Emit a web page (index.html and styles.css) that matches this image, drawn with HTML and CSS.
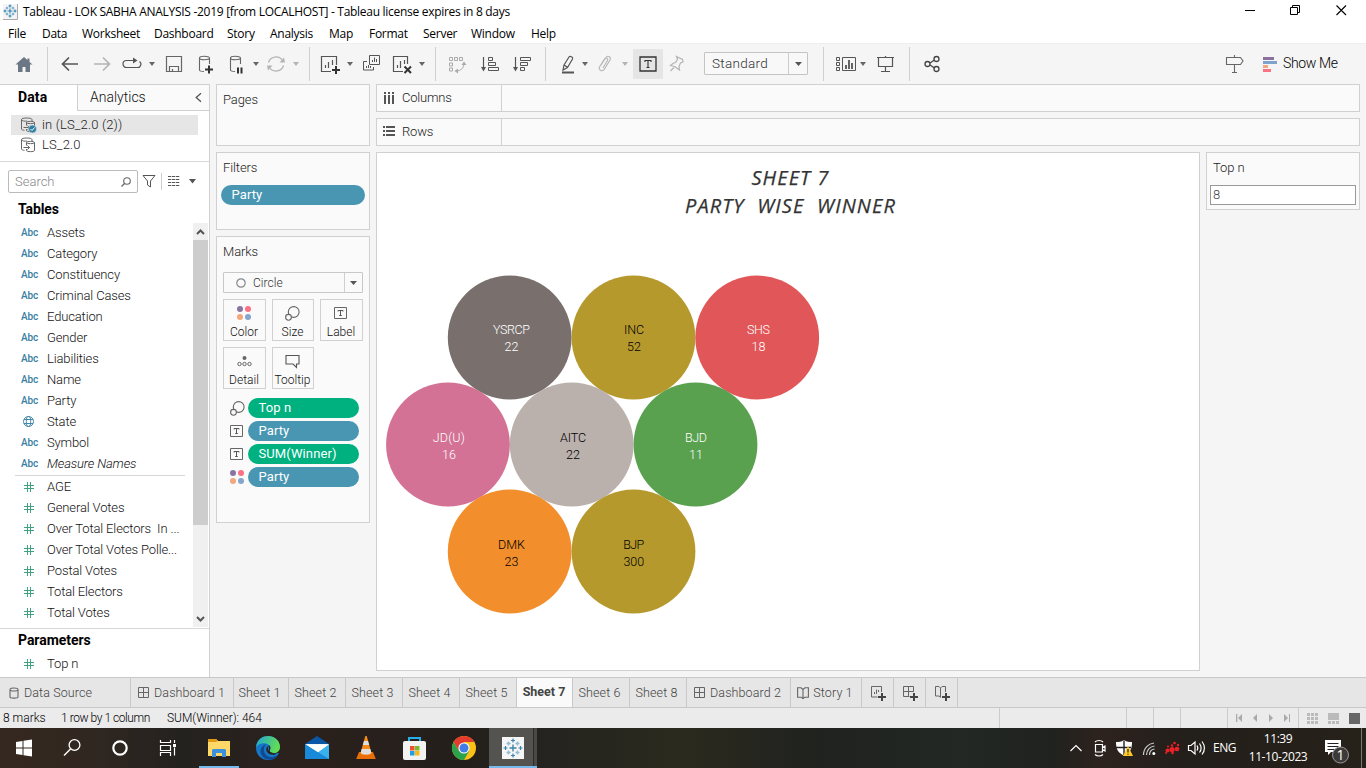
FILE: index.html
```html
<!DOCTYPE html>
<html lang="en">
<head>
<meta charset="utf-8">
<title>Tableau - LOK SABHA ANALYSIS -2019</title>
<link rel="stylesheet" href="styles.css">
</head>
<body>
<svg class="defs" width="0" height="0">
  <defs>
    <symbol id="logo" viewBox="0 0 22 22">
      <g fill="none" stroke="#3d84ab"><path d="M11 7.500v7M7.500 11h7" stroke-width="1.400"/><path d="M11 1.500v4M9 3.500h4M11 16.500v4M9 18.500h4M3.500 9v4M1.500 11h4M18.500 9v4M16.500 11h4" stroke-width="1.200"/></g>
      <g fill="none" stroke="#8fbad0" stroke-width="1.500"><path d="M6.500 4.500v4M4.500 6.500h4M15.500 4.500v4M13.500 6.500h4M6.500 13.500v4M4.500 15.500h4M15.500 13.500v4M13.500 15.500h4"/></g>
    </symbol>
    <symbol id="logo-sm" viewBox="0 0 14 14">
      <g fill="none" stroke="#2f83b0" stroke-width="1.100"><path d="M7 4.500v5M4.500 7h5M7 .5v3M5.500 2h3M7 10.500v3M5.500 12h3M2 5.500v3M.5 7h3M12 5.500v3M10.500 7h3"/></g>
      <g fill="none" stroke="#5c9dc0"><path d="M4 2.800v2.600M2.700 4h2.600M10 2.800v2.600M8.700 4h2.600M4 8.700v2.600M2.700 10h2.600M10 8.700v2.600M8.700 10h2.600"/></g>
    </symbol>
    <symbol id="caret" viewBox="0 0 6 4"><path d="M0 0h6L3 4z" fill="currentColor"/></symbol>
    <symbol id="dots" viewBox="0 0 14 14"><circle cx="3" cy="3" r="3" fill="#8a75a0"/><circle cx="11" cy="3" r="3" fill="#fb7284"/><circle cx="3" cy="11" r="3" fill="#f4a67c"/><circle cx="11" cy="11" r="3" fill="#84a6cb"/></symbol>
    <symbol id="size" viewBox="0 0 15 15"><g fill="#fafafa" stroke="#666" stroke-width="1.100"><circle cx="8.700" cy="6" r="5.400"/><circle cx="3.500" cy="11.300" r="2.900"/></g></symbol>
    <symbol id="tbox" viewBox="0 0 13 12"><path d="M.5.5h12v11H.5z" fill="none" stroke="#666"/><path d="M4 4.500V3.500h5v1M6.500 3.500v5M5.200 8.500h2.600" fill="none" stroke="#555"/></symbol>
    <symbol id="hash" viewBox="0 0 10 10"><path d="M3.500 0v10M6.500 0v10M0 3.500h10M0 6.500h10" stroke="#3fa37f" fill="none"/></symbol>
    <symbol id="grid" viewBox="0 0 11 11"><path d="M.5.5h10v10H.5zM5.500.5v10M.5 5.500h10" fill="none" stroke="#666"/></symbol>
    <symbol id="book" viewBox="0 0 12 12"><path d="M6 2.500 4 .8H.6v9.400h3.600L6 11.700l1.800-1.500h3.600V.8H8L6 2.500v9" fill="none" stroke="#666" stroke-width="1.100"/></symbol>
    <symbol id="dsrc" viewBox="0 0 16 16"><g fill="none" stroke="#666"><path d="M12 4V2.500C12 .5 1.500.5 1.500 2.500v9.500c0 .8 1.500 1.300 3 1.300M1.500 2.500C1.500 4 5 4.500 7 4"/><path d="M6.500 8.500v-3c0-1.500 8-1.500 8 0v8c0 1.500-8 1.500-8 0V12M6.500 5.500c0 1.500 8 1.500 8 0M3.500 10.500h6M7.500 8.500l2 2-2 2"/></g></symbol>
  </defs>
</svg>

<header class="titlebar">
  <svg class="app-icon" width="15" height="16"><rect width="15" height="16" fill="#f4f4f4"/><path d="M0 15.500h14.500V0" fill="none" stroke="#aaa"/><use href="#logo-sm" width="14" height="14"/></svg>
  <span class="title-text">Tableau - LOK SABHA ANALYSIS -2019 [from LOCALHOST] - Tableau license expires in 8 days</span>
  <svg class="win-controls" width="110" height="20"><g fill="none" stroke="#000"><path d="M0 8.500h10M45.500 5.500h7v7h-7zM47.500 5V3.500h7v7H53"/><path d="m91.500 3.500 9.500 9.500m0-9.500-9.500 9.500" stroke-width="1.100"/></g></svg>
</header>

<nav class="menubar">
  <span class="m-file">File</span><span class="m-data">Data</span><span class="m-work">Worksheet</span><span class="m-dash">Dashboard</span><span class="m-story">Story</span><span class="m-ana">Analysis</span><span class="m-map">Map</span><span class="m-format">Format</span><span class="m-server">Server</span><span class="m-window">Window</span><span>Help</span>
</nav>

<div class="toolbar">
  <svg class="ic g13"><path d="M11 4 2.500 11.500H5V19h4.500v-5h3v5H17v-7.500h2.500L16.500 9V5.500h-2V7z" fill="#6b7785"/></svg>
  <i class="sep g12"></i>
  <svg class="ic g11"><path d="M19 11H4M10 4.500 3.500 11l6.500 6.500" fill="none" stroke="#555" stroke-width="1.700"/></svg>
  <svg class="ic g10"><path d="M3 11h15M12 4.500l6.500 6.500-6.500 6.500" fill="none" stroke="#b4b4b4" stroke-width="1.700"/></svg>
  <svg class="ic g8"><path d="M13 7.500H5.500a3.500 3.500 0 0 0 0 7h11a3.300 3.300 0 0 0 2-6" fill="none" stroke="#555" stroke-width="1.200"/><path d="M12 4.500v6l4.500-3z" fill="#555"/></svg>
  <svg class="caret g6"><use href="#caret"/></svg>
  <svg class="ic g8"><path d="M3.500 3.500h15v15h-15zM6.500 18v-4.500h9V18M9.500 18v-2" fill="none" stroke="#666" stroke-width="1.200"/></svg>
  <svg class="ic g10"><path d="M9 18.500c-2.500 0-4.500-.6-4.500-1.500V5c0-2.300 10-2.300 10 0v6M4.500 5c0 2.300 10 2.300 10 0" fill="none" stroke="#666" stroke-width="1.100"/><path d="M14 12.500v8M10 16.500h8" stroke="#333" stroke-width="2" fill="none"/></svg>
  <svg class="ic g9"><path d="M9 18.500c-2.500 0-4.500-.6-4.500-1.500V5c0-2.300 10-2.300 10 0v6M4.500 5c0 2.300 10 2.300 10 0" fill="none" stroke="#666" stroke-width="1.100"/><path d="M12 14.500v6M15.500 14.500v6" stroke="#333" stroke-width="2" fill="none"/></svg>
  <svg class="caret g5"><use href="#caret"/></svg>
  <svg class="ic g6"><path d="M3.500 9.500a7.800 7.800 0 0 1 14-2M18.500 12.500a7.800 7.800 0 0 1-14 2" fill="none" stroke="#b4b4b4" stroke-width="1.300"/><path d="M14.500 9.500h5.500l-1-5zM7.500 12.500H2l1 5z" fill="#b4b4b4"/></svg>
  <svg class="caret pale g6"><use href="#caret"/></svg>
  <i class="sep g10"></i>
  <svg class="ic g9"><path d="M12 18.500H2.500v-15h15V12M6.500 15v-3M9.500 15V9M13.500 12V7" fill="none" stroke="#555" stroke-width="1.200"/><path d="M17 13v8M13 17h8" stroke="#333" stroke-width="2" fill="none"/></svg>
  <svg class="caret g6"><use href="#caret"/></svg>
  <svg class="ic g7"><path d="M9.500 2.500h10v9h-10zM7 8.500H3.500v8.500h10v-3M12.500 9V7M14.500 9V4.500M16.500 9V6M6.500 15v-2M8.500 15v-3M10.500 15v-2" fill="none" stroke="#555"/></svg>
  <svg class="ic g10"><path d="M11 18.500H1.500v-15h14V11M5.500 15v-3M8.500 15V8M12.500 11V7" fill="none" stroke="#555" stroke-width="1.200"/><path d="m12.500 13.500 6.500 6.500m0-6.500L12.500 20" stroke="#333" stroke-width="2" fill="none"/></svg>
  <svg class="caret g5"><use href="#caret"/></svg>
  <i class="sep g10"></i>
  <svg class="ic g10"><path d="M3.500 4.500h3v3h-3zM8.500 4.500h3v3h-3zM13.500 4.500h3v3h-3zM3.500 10h3v3h-3zM3.500 15h3v3h-3zM18 10c0 5-3 8-8 8" fill="none" stroke="#aaa"/><path d="m15.500 12 2.500-3.500 2.500 3.500zM12 15.500 8.500 18l3.500 2.500z" fill="#aaa"/></svg>
  <svg class="ic g11"><path d="M4.500 4v13" stroke="#555" stroke-width="1.200"/><path d="m2 14 2.500 4.500L7 14z" fill="#555"/><path d="M9.500 4.500h4v3h-4zM9.500 9.500h7v3h-7zM9.500 14.500h10v3h-10z" fill="none" stroke="#555"/></svg>
  <svg class="ic g10"><path d="M4.500 4v13" stroke="#555" stroke-width="1.200"/><path d="m2 14 2.500 4.500L7 14z" fill="#555"/><path d="M9.500 4.500h10v3h-10zM9.500 9.500h7v3h-7zM9.500 14.500h4v3h-4z" fill="none" stroke="#555"/></svg>
  <i class="sep g12"></i>
  <svg class="ic g11"><path d="M7 12 12 4c1-1.500 4.500 0 3.500 2l-5 8.500L6 17zM7 12l3.500 2.300" fill="none" stroke="#555" stroke-width="1.200"/><path d="M5 19.500h12" stroke="#555" stroke-width="2"/></svg>
  <svg class="caret g3"><use href="#caret"/></svg>
  <svg class="ic g6"><path d="m7 12 5-7.500c2-2.500 5.500-.5 4 2.500l-5.500 9c-2 3.500-6.500 1-5-2l5-8c1.500-2 4-.5 3 1.500l-4.500 7.500" fill="none" stroke="#b4b4b4" stroke-width="1.100"/></svg>
  <svg class="caret pale g6"><use href="#caret"/></svg>
  <span class="tbtn g5"><svg width="18" height="16"><path d="M1 1h16v14H1z" fill="none" stroke="#333" stroke-width="1.300"/><path d="M6 6V4.500h6V6M9 4.500v7M7.500 11.500h3" fill="none" stroke="#333" stroke-width="1.100"/></svg></span>
  <svg class="ic g3"><path d="m10.500 3.500 6 3 .5 2.500-2.500 1-1.500 3.500.5 3.500-3.500-2.500-1.500-1-4-1 2.500-2 3-1.500 1.500-3zM8 14.500 4.500 18" fill="none" stroke="#b4b4b4" stroke-width="1.200"/></svg>
  <span class="combo g16"><span class="combo-label">Standard</span><span class="combo-arrow"><svg width="7" height="4"><path d="M0 0h7L3.500 4z" fill="#555"/></svg></span></span>
  <i class="sep g15"></i>
  <svg class="ic g11"><path d="M1.500 4.500h3v3h-3zM1.500 9.500h3v3h-3zM1.500 14.500h3v3h-3zM7.500 4.500h13v13h-13z" fill="none" stroke="#555"/><path d="M11 16v-4M14 16V7M17 16v-6" stroke="#555" stroke-width="1.800"/></svg>
  <svg class="caret g3"><use href="#caret"/></svg>
  <svg class="ic g8"><path d="M3 4.500h17M4.500 4.500v9h14v-9M11.500 3v1M11.500 13.500v5M7 18.500h9" fill="none" stroke="#555" stroke-width="1.200"/></svg>
  <i class="sep g13"></i>
  <svg class="ic g11"><g fill="none" stroke="#444" stroke-width="1.300"><circle cx="6.500" cy="11" r="2.500"/><circle cx="15.500" cy="6" r="2.500"/><circle cx="15.500" cy="16" r="2.500"/><path d="m9 10 4.500-3M9 12l4.500 3"/></g></svg>
  <svg class="ic sign"><path d="M11.500 2v2M11.500 11.500v8M9 19.500h5M3.500 4.500h14l2.500 3.500-2.500 3.500h-14z" fill="none" stroke="#666" stroke-width="1.100"/></svg>
  <svg class="show-icon" width="15" height="15"><path d="M0 0h11v3H0z" fill="#8a729c"/><path d="M0 4h14v3H0z" fill="#7fa3cd"/><path d="M0 8h5v3H0z" fill="#f4a67c"/><path d="M0 12h8v3H0z" fill="#fb7284"/></svg>
  <span class="show-text">Show Me</span>
</div>

<main class="workspace">
  <aside class="data-pane">
    <div class="pane-tabs"><span class="pane-tab active">Data</span><span class="pane-tab other"><span>Analytics</span><svg width="7" height="10"><path d="M6 .2 1.200 4.500 6 8.800" fill="none" stroke="#555" stroke-width="1.300"/></svg></span></div>
    <div class="sources">
      <div class="source selected"><svg width="18" height="16"><use href="#dsrc" width="16" height="16"/><circle cx="12.500" cy="12" r="4" fill="#2c7fa0" stroke="#e6e6e6" stroke-width=".6"/><path d="m10.500 12 1.500 1.500 2.500-3" stroke="#fff" fill="none"/></svg><span>in (LS_2.0 (2))</span></div>
      <div class="source"><svg width="18" height="16"><use href="#dsrc" width="16" height="16"/></svg><span>LS_2.0</span></div>
    </div>
    <div class="search-row">
      <div class="search"><span>Search</span><svg width="10" height="10"><circle cx="6" cy="4" r="3.300" fill="none" stroke="#666" stroke-width="1.100"/><path d="M3.500 6.500.5 9.500" stroke="#666" stroke-width="1.200"/></svg></div>
      <svg class="funnel" width="14" height="13"><path d="M1 .5h12L8.500 6v6l-3-2V6z" fill="none" stroke="#555"/></svg>
      <i class="vline"></i>
      <svg class="listic" width="13" height="10"><path d="M0 .5h12M0 3.500h12M0 6.500h12M0 9.500h12" stroke="#555" stroke-dasharray="3.300 .7" fill="none"/></svg>
      <svg class="lcaret" width="7" height="5"><path d="M0 0h7L3.500 4.500z" fill="#555"/></svg>
    </div>
    <h2 class="group">Tables</h2>
    <div class="list-wrap">
      <div class="list">
        <div class="field"><b>Abc</b>Assets</div><div class="field"><b>Abc</b>Category</div><div class="field"><b>Abc</b>Constituency</div><div class="field"><b>Abc</b>Criminal Cases</div><div class="field"><b>Abc</b>Education</div><div class="field"><b>Abc</b>Gender</div><div class="field"><b>Abc</b>Liabilities</div><div class="field"><b>Abc</b>Name</div><div class="field"><b>Abc</b>Party</div>
        <div class="field"><b><svg class="globe" width="11" height="11"><g fill="none" stroke="#4588a8"><circle cx="5.500" cy="5.500" r="5"/><ellipse cx="5.500" cy="5.500" rx="2.200" ry="5"/><path d="M1 3.500h9M1 7.500h9"/></g></svg></b>State</div>
        <div class="field"><b>Abc</b>Symbol</div><div class="field"><b>Abc</b><em>Measure Names</em></div>
        <div class="rule"></div>
        <div class="field"><b><svg class="hash"><use href="#hash"/></svg></b>AGE</div><div class="field"><b><svg class="hash"><use href="#hash"/></svg></b>General Votes</div><div class="field"><b><svg class="hash"><use href="#hash"/></svg></b>Over Total Electors&nbsp; In ...</div><div class="field"><b><svg class="hash"><use href="#hash"/></svg></b>Over Total Votes Polle...</div><div class="field"><b><svg class="hash"><use href="#hash"/></svg></b>Postal Votes</div><div class="field"><b><svg class="hash"><use href="#hash"/></svg></b>Total Electors</div><div class="field"><b><svg class="hash"><use href="#hash"/></svg></b>Total Votes</div>
      </div>
      <div class="scroll"><svg width="15" height="17"><path d="m4 11 3.500-3.500L11 11" fill="none" stroke="#555" stroke-width="2"/></svg><div class="thumb"></div><svg width="15" height="17"><path d="m4 7 3.500 3.500L11 7" fill="none" stroke="#555" stroke-width="2"/></svg></div>
    </div>
    <div class="params"><h2 class="group">Parameters</h2><div class="field"><b><svg class="hash"><use href="#hash"/></svg></b>Top n</div></div>
  </aside>

  <section class="cards">
    <div class="card pages"><h3>Pages</h3></div>
    <div class="card filters"><h3>Filters</h3><span class="pill blue">Party</span></div>
    <div class="card marks"><h3>Marks</h3>
      <div class="mark-type"><svg width="10" height="10"><circle cx="5" cy="5" r="4.200" fill="none" stroke="#888" stroke-width="1.200"/></svg><span>Circle</span><i><svg width="7" height="4"><path d="M0 0h7L3.500 4z" fill="#555"/></svg></i></div>
      <div class="mark-grid">
        <div class="mark"><svg width="15" height="15"><use href="#dots" width="14" height="14"/></svg><span>Color</span></div>
        <div class="mark"><svg width="15" height="15"><use href="#size" width="15" height="15"/></svg><span>Size</span></div>
        <div class="mark"><svg width="15" height="15"><use href="#tbox" y="1" width="13" height="12"/></svg><span>Label</span></div>
        <div class="mark"><svg width="15" height="15"><circle cx="7.500" cy="4" r="2" fill="#666"/><g fill="none" stroke="#666"><circle cx="2.500" cy="10" r="1.700"/><circle cx="7.500" cy="10" r="1.700"/><circle cx="12.500" cy="10" r="1.700"/></g></svg><span>Detail</span></div>
        <div class="mark"><svg width="15" height="15"><path d="M1 1.500h13v8.500h-2.500v3.500L8 10H1z" fill="none" stroke="#555" stroke-width="1.100"/></svg><span>Tooltip</span></div>
      </div>
      <div class="shelf-row"><svg width="15" height="15"><use href="#size" width="15" height="15"/></svg><span class="pill green">Top n</span></div>
      <div class="shelf-row"><svg width="15" height="12"><use href="#tbox" width="13" height="12"/></svg><span class="pill blue">Party</span></div>
      <div class="shelf-row"><svg width="15" height="12"><use href="#tbox" width="13" height="12"/></svg><span class="pill green">SUM(Winner)</span></div>
      <div class="shelf-row"><svg width="15" height="14"><use href="#dots" width="14" height="14"/></svg><span class="pill blue">Party</span></div>
    </div>
  </section>

  <section class="stage">
    <div class="shelf"><div class="shelf-name"><svg width="12" height="12"><path d="M2 0v2M6 0v2M10 0v2M2 3v9M6 3v9M10 3v9" stroke="#555" stroke-width="2"/></svg>Columns</div></div>
    <div class="shelf"><div class="shelf-name"><svg width="12" height="12"><path d="M0 1h2M0 5h2M0 9h2M3 1h9M3 5h9M3 9h9" stroke="#555" stroke-width="2"/></svg>Rows</div></div>
    <div class="stage-body">
      <div class="view">
        <h1 class="sheet-title">SHEET 7<br>PARTY&nbsp; WISE&nbsp; WINNER</h1>
        <svg class="chart" width="822" height="448">
          <circle cx="132.700" cy="117.500" r="61.900" fill="#79706e"/><circle cx="256.500" cy="117.500" r="61.900" fill="#b6992d"/><circle cx="380.200" cy="117.500" r="61.900" fill="#e15759"/>
          <circle cx="71" cy="224.500" r="61.900" fill="#d37295"/><circle cx="194.700" cy="224.500" r="61.900" fill="#bab0ac"/><circle cx="318.500" cy="224.500" r="61.900" fill="#59a14f"/>
          <circle cx="132.700" cy="331.500" r="61.900" fill="#f28e2b"/><circle cx="256.500" cy="331.500" r="61.900" fill="#b6992d"/>
          <g class="light"><text x="134.500" y="114" textLength="37">YSRCP</text><text x="134.500" y="131">22</text><text x="381.500" y="114" textLength="23">SHS</text><text x="381.500" y="131">18</text><text x="71.800" y="222" textLength="32">JD(U)</text><text x="72" y="239">16</text><text x="319" y="222" textLength="22">BJD</text><text x="319" y="239">11</text></g>
          <g class="dark"><text x="257" y="114" textLength="20">INC</text><text x="257" y="131">52</text><text x="196" y="222" textLength="26">AITC</text><text x="196" y="239">22</text><text x="134.500" y="329" textLength="27">DMK</text><text x="134.500" y="346">23</text><text x="256.800" y="329" textLength="21">BJP</text><text x="256.800" y="346">300</text></g>
        </svg>
      </div>
      <div class="param-card"><span>Top n</span><div class="param-input">8</div></div>
    </div>
  </section>
</main>

<nav class="sheets">
  <span class="tab t-src"><svg width="10" height="12"><path d="M1 2.500v7.500c0 1.500 8 1.500 8 0V2.500C9 .5 1 .5 1 2.500s8 2 8 0" fill="none" stroke="#666" stroke-width="1.100"/></svg>Data Source</span>
  <span class="tab t-d1"><svg width="11" height="11"><use href="#grid"/></svg>Dashboard 1</span>
  <span class="tab t-55">Sheet 1</span><span class="tab t-57">Sheet 2</span><span class="tab t-57">Sheet 3</span><span class="tab t-57">Sheet 4</span><span class="tab t-57">Sheet 5</span><span class="tab t-56 current">Sheet 7</span><span class="tab t-57">Sheet 6</span><span class="tab t-57">Sheet 8</span>
  <span class="tab t-d2"><svg width="11" height="11"><use href="#grid"/></svg>Dashboard 2</span>
  <span class="tab t-st"><svg width="12" height="12"><use href="#book"/></svg>Story 1</span>
  <span class="tab t-new"><svg width="16" height="16"><path d="M7.500 12H1.500V1.500h10V7M4.500 9V7M6.500 9V4.500M8.500 7V5" fill="none" stroke="#666"/><path d="M12 8v8M8 12h8" stroke="#444" stroke-width="2"/></svg></span>
  <span class="tab t-new"><svg width="16" height="16"><path d="M7.500 11.500H1.500v-10h10V7M6.500 1.500v10M1.500 6.500h10" fill="none" stroke="#666"/><path d="M12 8v8M8 12h8" stroke="#444" stroke-width="2"/></svg></span>
  <span class="tab t-new"><svg width="16" height="16"><path d="M7 12.500 5 11H1.500V1.500h3.500L6.500 3l1.500-1.500h3.500V7M6.500 3v9" fill="none" stroke="#666"/><path d="M12 8v8M8 12h8" stroke="#444" stroke-width="2"/></svg></span>
</nav>

<footer class="status">
  <span class="s-marks">8 marks</span><span class="s-rows">1 row by 1 column</span><span class="s-sum">SUM(Winner): 464</span>
  <span class="cell c-a"></span><span class="cell c-b"></span><span class="cell c-b"></span><span class="cell c-c"></span>
  <span class="cell c-nav"><svg width="54" height="8"><g fill="#aaa"><path d="M0 0h1.300v8H0zM6 0v8L2 4zM21 0v8l-4-4zM33 0v8l4-4zM48 0v8l4-4zM53 0h1.200v8H53z"/></g></svg></span>
  <span class="cell c-view"><svg width="53" height="11"><path d="M0 0h3v3H0zM4 0h3v3H4zM8 0h3v3H8zM0 4h3v3H0zM4 4h3v3H4zM8 4h3v3H8zM0 8h3v3H0zM4 8h3v3H4zM8 8h3v3H8zM21 0h11v7H21zM21 8h3v3h-3zM25 8h3v3h-3zM29 8h3v3h-3z" fill="#bbb"/><path d="M42 0h11v11H42z" fill="#666"/></svg></span>
</footer>

<div class="taskbar">
  <svg class="task" width="48" height="40"><path d="m16 14 6.500-1v6.500H16zM23.500 12.800 32 11.500v8h-8.500zM16 20.500h6.500V27L16 26zM23.500 20.500H32v8l-8.500-1.300z" fill="#fff"/></svg>
  <svg class="task" width="48" height="40"><circle cx="26.500" cy="17" r="5.400" fill="none" stroke="#fff" stroke-width="1.300"/><path d="m22.500 21-6.500 6.500" stroke="#fff" stroke-width="1.400"/></svg>
  <svg class="task" width="48" height="40"><circle cx="24" cy="20" r="6.700" fill="none" stroke="#fff" stroke-width="2.200"/></svg>
  <svg class="task" width="48" height="40"><path d="M16.500 12v2.500h10V12M16.500 28v-3.500h10V28M16.500 17.500h10v5h-10zM30.500 12v3M30.500 19.500v8" fill="none" stroke="#fff" stroke-width="1.200"/><path d="M29 16h3v3h-3z" fill="#fff"/></svg>
  <svg class="task g3 running" width="48" height="40"><path d="M13 11h8l2 2h12v15H13z" fill="#ffd867"/><path d="M13 11h8l2 2-2 1h-8z" fill="#e09a18"/><path d="M17 29v-6.500c0-.8.600-1.500 1.500-1.500h11c.9 0 1.500.7 1.500 1.500V29h-4v-4h-6v4z" fill="#3d91dc"/></svg>
  <svg class="task g1" width="48" height="40"><defs><linearGradient id="eg" x1="0" y1="0" x2="1" y2=".3"><stop offset="0" stop-color="#1fa5d8"/><stop offset="1" stop-color="#62dc55"/></linearGradient></defs><circle cx="24" cy="20" r="12" fill="#1676c8"/><path d="M25 18h12v7H25z" fill="#272320"/><path d="M12 19C13 11 19 8 24 8c8 0 12 6 12 11 0 4-3 6-6 6-3 0-5-1-4-3 3-6-8-10-14-3z" fill="url(#eg)"/><path d="M23 16c-5 2-4 12 3 13 3 .5 6-1 8-2-3 6-11 6-15 2-5-5-2-12 4-13z" fill="#114a91"/><path d="M26 17.500c-2.500 1-2.500 3.500-1 5.500 2 2 5 2.500 8 2l-1.500 1.500c-4 1-8-.5-9-3.500-1-3 1-5.500 3.500-5.500z" fill="#272320"/></svg>
  <svg class="task g1" width="48" height="40"><path d="M12 16 24 8l12 8z" fill="#0a57a8"/><path d="M12 16h24v15H12z" fill="#39b1ef"/><path d="M12 16h24L24 25z" fill="#f5f5f5"/><path d="m12 16 24 15H12z" fill="#188ad9"/><path d="M14 17h21l-10 7z" fill="#fff"/></svg>
  <svg class="task g1" width="48" height="40"><path d="m17 24-2.800 7h19.600L31 24z" fill="#e96e07"/><path d="m23.300 8-4.800 17c1 3 10 3 11 0l-4.800-17z" fill="#f58b1b"/><path d="m22 13-1.200 4h6.400L26 13zM19.700 21l-1 4c2 2 8.600 2 10.600 0l-1-4z" fill="#dedede"/></svg>
  <svg class="task g1" width="48" height="40"><path d="M18 14V10h11v4" fill="none" stroke="#27aee8" stroke-width="2"/><rect x="12" y="13" width="23" height="19" rx="2" fill="#f2f2f2"/><path d="M19 18h4.500v4.500H19z" fill="#ef5126"/><path d="M24 18h4.500v4.500H24z" fill="#7ab929"/><path d="M19 23h4.500v4.500H19z" fill="#1fa0e5"/><path d="M24 23h4.500v4.500H24z" fill="#fbb914"/></svg>
  <svg class="task g1" width="48" height="40"><circle cx="24" cy="20" r="12" fill="#fbc116"/><path d="M13.600 14a12 12 0 0 1 20.800 0H24l-5.200 9z" fill="#e33b2e"/><path d="M13.600 14a12 12 0 0 0 10.400 18l5.200-9H18.800z" fill="#2ba24c"/><circle cx="24" cy="20" r="5.600" fill="#fff"/><circle cx="24" cy="20" r="4.500" fill="#3f7de8"/></svg>
  <svg class="task g1" width="48" height="40"><path d="M0 0h44v40H0z" fill="#555350"/><path d="M44 0h1v40h-1z" fill="#2e2d2b"/><path d="M45 0h3v40h-3z" fill="#4b4947"/><path d="M13 9h22v22H13z" fill="#f6f6f6"/><use href="#logo" x="13" y="9" width="22" height="22"/><path d="M0 38h48v2H0z" fill="#76b9ed"/></svg>

  <svg class="tray" width="140" height="40"><g fill="none" stroke="#fff" stroke-width="1.200">
    <path d="m1.500 23 5.500-5.500 5.500 5.500"/>
    <path d="M26.500 16.500h7v7.500h-7zM33.500 19.500l2.500-1.500v5l-2.500-1.500M26 14c2-2 6-2 8 0M26 26.500c2 2 6 2 8 0"/>
    <path d="M122 17.500h-2.500v5h2.500l4 3.500V14z"/><path d="M128 17.500c1 1.500 1 3.500 0 5M130.500 15.500c2 3 2 6.500 0 9M133 13.500c3 4 3 9 0 13"/>
    <path d="M74.500 27c0-7 5-11.500 10.500-12M77.500 27c0-5 3.500-8.500 8-9M80.500 27c0-3 2-5.500 5-6" stroke="#ccc"/></g>
    <circle cx="84.800" cy="25.500" r="1.500" fill="#fff"/>
    <path d="M55 12c-3 2-5 2-8 2 0 7 2 11 8 13.500 6-2.500 8-6.500 8-13.500-3 0-5 0-8-2z" fill="#fff"/><path d="M55 12.500v14.500M47 19.500h15" stroke="#222" stroke-width="1.400"/><path d="m59 18-5 10h10z" fill="#ffc928"/><path d="M59 21v3.500M59 25.700v1" stroke="#222" stroke-width="1.200"/>
    <g fill="#ed2028"><circle cx="98.500" cy="22.500" r="2"/><circle cx="103" cy="21.500" r="2.600"/><circle cx="99" cy="18.500" r="1"/><circle cx="103" cy="17.500" r="1.200"/><circle cx="108" cy="21" r="2.300"/><circle cx="105.500" cy="15" r="1.300"/><circle cx="103.500" cy="25" r="1.300"/><circle cx="109" cy="17" r="1.200"/><circle cx="97" cy="25" r="1"/></g>
  </svg>
  <span class="lang">ENG</span>
  <span class="clock"><span>11:39</span><span class="date">11-10-2023</span></span>
  <svg class="notif" width="48" height="40"><path d="M7 12h16v12H13l-3 3v-3H7z" fill="#fff"/><path d="M9.500 15.500h11M9.500 18.500h11M9.500 21.500h7" stroke="#222"/><circle cx="22.500" cy="27" r="8" fill="#3c3b38" stroke="#999"/><text x="22.500" y="31.500">1</text><path d="M43.500 0v40" stroke="#777"/></svg>
</div>
</body>
</html>
```

FILE: styles.css
```css
* { box-sizing: border-box; }
body { margin: 0; width: 1366px; height: 768px; overflow: hidden; background: #f5f5f5; color: #333; font: 300 13px/16px Roboto, sans-serif; display: flex; flex-direction: column; }
h1, h2, h3 { margin: 0; font-weight: 300; }
svg { display: block; flex: none; }
.defs { position: absolute; }

.titlebar { height: 24px; flex: none; background: #fff; display: flex; align-items: center; color: #000; font: 12px/16px "Open Sans", sans-serif; }
.app-icon { margin-left: 3px; }
.title-text { margin-left: 5px; white-space: nowrap; letter-spacing: -0.29px; }
.win-controls { margin-left: auto; margin-right: 11px; }

.menubar { height: 19px; flex: none; background: #fff; display: flex; padding: 2px 0 0 8px; color: #000; font: 12px/16px "Open Sans", sans-serif; letter-spacing: -0.27px; white-space: nowrap; }
.menubar span { flex: none; }
.m-file { width: 34px; }
.m-data { width: 40px; }
.m-work { width: 72px; }
.m-dash { width: 73px; }
.m-story { width: 43px; }
.m-ana { width: 59px; }
.m-map { width: 40px; }
.m-format { width: 54px; }
.m-server { width: 48px; }
.m-window { width: 60px; }

.toolbar { height: 41px; flex: none; border-top: 1px solid #eee; display: flex; align-items: center; background: #f5f5f5; }
.ic { width: 22px; height: 22px; }
.caret { width: 6px; height: 4px; color: #666; }
.pale { color: #b4b4b4; }
.sep { width: 1px; height: 34px; background: #d0d0d0; flex: none; }
.g1 { margin-left: 1px; }
.g3 { margin-left: 3px; }
.g5 { margin-left: 5px; }
.g6 { margin-left: 6px; }
.g7 { margin-left: 7px; }
.g8 { margin-left: 8px; }
.g9 { margin-left: 9px; }
.g10 { margin-left: 10px; }
.g11 { margin-left: 11px; }
.g12 { margin-left: 12px; }
.g13 { margin-left: 13px; }
.g15 { margin-left: 15px; }
.g16 { margin-left: 16px; }
.tbtn { width: 30px; height: 30px; background: #e5e5e5; display: flex; align-items: center; justify-content: center; }
.combo { width: 104px; height: 23px; border: 1px solid #c4c4c4; border-radius: 1px; background: #f8f8f8; display: flex; margin-bottom: 1px; }
.combo-label { flex: 1; padding-left: 7px; line-height: 21px; font-size: 13.5px; color: #333; letter-spacing: 0.3px; }
.combo-arrow { width: 19px; border-left: 1px solid #ccc; display: flex; align-items: center; justify-content: center; }
.sign { margin-left: auto; }
.show-icon { margin-left: 18px; }
.show-text { margin-left: 5px; width: 83px; color: #000; font-size: 14px; letter-spacing: -0.35px; margin-bottom: 2px; }

.workspace { height: 593px; flex: none; display: flex; }
.data-pane { width: 210px; border-right: 1px solid #d0d0d0; border-top: 1px solid #d0d0d0; background: #fff; display: flex; flex-direction: column; }
.pane-tabs { display: flex; height: 26px; flex: none; }
.pane-tab { line-height: 25px; font-size: 14px; }
.active { width: 77px; padding-left: 18px; font-weight: 700; color: #000; letter-spacing: 0.1px; }
.other { flex: 1; background: #fafafa; border-left: 1px solid #d0d0d0; border-bottom: 1px solid #d0d0d0; padding: 0 7px 0 12px; display: flex; justify-content: space-between; align-items: center; color: #111; }
.sources { height: 51px; flex: none; padding: 4px 11px; border-bottom: 1px solid #d8d8d8; }
.source { height: 20px; display: flex; align-items: center; padding-left: 9px; color: #222; letter-spacing: 0.15px; }
.source span { margin-left: 4px; }
.selected { background: #e6e6e6; }
.search-row { display: flex; align-items: center; height: 23px; margin: 8px 0 0 8px; flex: none; }
.search { width: 130px; height: 23px; border: 1px solid #bbb; border-radius: 2px; display: flex; justify-content: space-between; align-items: center; padding: 0 6px; color: #888; }
.funnel { margin-left: 4px; }
.vline { width: 1px; height: 17px; background: #ccc; margin-left: 5px; }
.listic { margin-left: 6px; margin-bottom: 1px; }
.lcaret { margin-left: 8px; }
.group { font-size: 14px; line-height: 18px; font-weight: 700; color: #000; padding-left: 18px; }
.search-row + .group { margin-top: 7px; height: 22px; flex: none; letter-spacing: -0.1px; }
.params .group { letter-spacing: -0.05px; }
.list-wrap { display: flex; height: 406px; flex: none; }
.list { width: 193px; }
.field { height: 21px; line-height: 21px; display: flex; padding-left: 21px; font-size: 13px; white-space: nowrap; color: #111; letter-spacing: -0.14px; }
.field b { width: 26px; flex: none; display: flex; align-items: center; font-size: 10px; font-weight: 500; color: #3a80a2; letter-spacing: -0.1px; }
.hash { width: 10px; height: 10px; margin-left: 3px; }
.globe { margin-left: 2px; }
.rule { height: 1px; background: #d8d8d8; margin: 1px 8px 0 15px; }
.scroll { width: 15px; margin: 1px 0 0; height: 404px; background: #f0f0f0; display: flex; flex-direction: column; }
.thumb { height: 285px; background: #cdcdcd; margin-bottom: auto; }
.params { border-top: 1px solid #d8d8d8; padding-top: 2px; }
.params .field { margin-top: 4px; }

.cards { width: 154px; margin-left: 6px; display: flex; flex-direction: column; gap: 6px; }
.card { border: 1px solid #d0d0d0; background: #fafafa; padding: 7px 4px 0 6px; }
.card h3 { font-size: 13px; line-height: 16px; color: #222; letter-spacing: -0.1px; }
.pages { height: 62px; }
.filters { height: 78px; }
.marks { height: 287px; }
.pill { display: block; height: 20px; border-radius: 10px; color: #fff; line-height: 20px; padding-left: 10.5px; font-weight: 400; letter-spacing: 0.1px; }
.blue { background: #4996b2; }
.green { background: #00b180; }
.filters .pill { margin: 9px 0 0 -2px; }
.mark-type { height: 21px; margin: 12px 2px 0 0; border: 1px solid #c8c8c8; border-radius: 1px; display: flex; align-items: center; padding-left: 12px; font-size: 12px; color: #333; }
.mark-type span { margin-left: 7px; letter-spacing: 0.05px; }
.mark-type i { width: 18px; height: 19px; border-left: 1px solid #d0d0d0; margin-left: auto; display: flex; align-items: center; justify-content: center; }
.mark-grid { display: grid; grid-template-columns: 43px 42px 43px; column-gap: 6px; row-gap: 6px; margin: 6px 0 9px; }
.mark { height: 42px; border: 1px solid #d0d0d0; display: flex; flex-direction: column; align-items: center; padding: 6px 1px 0 0; font-size: 12px; line-height: 14px; color: #111; }
.mark span { margin-top: 4px; }
.shelf-row { display: flex; align-items: center; height: 20px; margin-bottom: 3px; padding-left: 7px; }
.shelf-row .pill { width: 111px; margin-left: 3px; }

.stage { width: 984px; margin-left: 6px; display: flex; flex-direction: column; gap: 6px; }
.shelf { height: 28px; border: 1px solid #d0d0d0; background: #fafafa; flex: none; }
.shelf-name { width: 125px; height: 26px; border-right: 1px solid #d0d0d0; display: flex; align-items: center; gap: 7px; padding-left: 6px; color: #222; letter-spacing: -0.2px; }
.stage-body { display: flex; gap: 6px; align-items: flex-start; }
.view { width: 824px; height: 519px; border: 1px solid #d0d0d0; background: #fff; padding-top: 11px; }
.sheet-title { height: 56px; text-align: center; padding-left: 5px; font: italic 400 20px/28px "Open Sans", sans-serif; letter-spacing: 1.1px; -webkit-text-stroke: 0.25px #333; color: #333; white-space: nowrap; }
.chart text { font: 300 12.5px Roboto, sans-serif; text-anchor: middle; }
.light { fill: #fff; }
.dark { fill: #000; }
.param-card { width: 154px; height: 58px; border: 1px solid #d0d0d0; background: #fafafa; padding: 7px 3px 0; color: #222; letter-spacing: -0.1px; }
.param-card span { padding-left: 3px; }
.param-input { height: 20px; margin-top: 9px; border: 1px solid #999; background: #fff; line-height: 18px; padding-left: 2px; color: #444; }

.sheets { height: 31px; flex: none; display: flex; border-top: 1px solid #c8c8c8; border-bottom: 1px solid #c8c8c8; background: #e6e6e6; color: #444; }
.tab { border-right: 1px solid #c8c8c8; display: flex; align-items: center; justify-content: center; white-space: nowrap; flex: none; font-size: 12.5px; padding-right: 3px; letter-spacing: 0.1px; }
.t-src { width: 131px; justify-content: flex-start; padding-left: 9px; gap: 5px; }
.t-d1 { width: 103px; gap: 5px; padding-right: 1px; }
.t-d2 { width: 104px; gap: 5px; padding-right: 2px; }
.t-st { width: 71px; gap: 4px; padding-right: 2px; }
.t-55 { width: 55px; }
.t-56 { width: 56px; }
.t-57 { width: 57px; }
.t-new { width: 32px; padding-right: 0; }
.current { background: #fafafa; color: #444; font-weight: 700; font-size: 12.5px; letter-spacing: 0; padding-right: 1px; padding-bottom: 1px; }

.status { height: 20px; flex: none; background: #ebebeb; display: flex; align-items: center; color: #000; font-size: 12px; padding-left: 3px; white-space: nowrap; }
.s-marks { width: 58px; }
.s-rows { width: 106px; letter-spacing: -0.5px; word-spacing: 0; }
.s-rows { letter-spacing: -0.45px; }
.s-sum { letter-spacing: -0.05px; }
.cell { height: 20px; border-left: 1px solid #ccc; display: flex; align-items: center; }
.c-a { width: 127px; margin-left: auto; }
.c-b { width: 27px; }
.c-c { width: 47px; }
.c-nav { width: 71px; padding-left: 8px; }
.c-view { width: 68px; padding-left: 8px; }

.taskbar { height: 40px; flex: none; display: flex; background: linear-gradient(90deg, #352820 0, #302720 90px, #24221f 180px, #2b211d 300px, #241f1b 460px, #24231f 540px, #2b2a1e 680px, #20221f 820px, #222824 960px, #20221f 1050px, #2d221e 1100px, #231f1b 1190px, #262119 1366px); color: #fff; font: 12px/16px "Open Sans", sans-serif; }
.running { background: linear-gradient(#76b9ed, #76b9ed) 4px 38px / 40px 2px no-repeat; }
.tray { margin-left: auto; }
.lang { margin-left: 4px; width: 33px; line-height: 39px; letter-spacing: -0.5px; }
.clock { width: 64px; display: flex; flex-direction: column; align-items: center; padding-top: 2px; line-height: 18px; letter-spacing: -0.45px; }
.date { letter-spacing: -0.4px; }
.notif { margin-left: 8px; }
.notif text { fill: #fff; font: 14px "Open Sans", sans-serif; text-anchor: middle; }
```
